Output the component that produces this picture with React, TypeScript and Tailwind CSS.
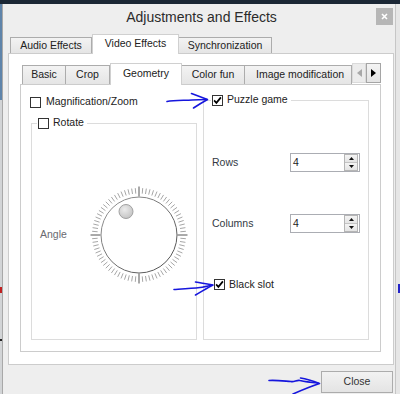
import React from "react";

function Check({ checked }: { checked?: boolean }) {
  return (
    <span className="w-[11px] h-[11px] border border-[#333333] bg-white flex items-center justify-center shrink-0">
      {checked && (
        <svg width="9" height="9" viewBox="0 0 9 9">
          <path d="M1.1 4.4 L3.4 6.9 L7.9 1.4" fill="none" stroke="#000" strokeWidth="1.7" />
        </svg>
      )}
    </span>
  );
}

function Spin({ value }: { value: string }) {
  return (
    <div className="w-[70px] h-[19px] border border-[#abadb3] bg-white flex items-center">
      <span className="pl-[2px] text-[10.5px] text-[#222]">{value}</span>
      <div className="ml-auto mr-px h-[17px] w-[14px] flex flex-col border border-[#b5b5b5]">
        <div className="flex-1 flex items-center justify-center bg-linear-to-b from-[#f4f4f4] to-[#e4e4e4] border-b border-[#c4c4c4]">
          <svg width="5" height="3" viewBox="0 0 5 3">
            <path d="M0 3 L2.5 0 L5 3 Z" fill="#111" />
          </svg>
        </div>
        <div className="flex-1 flex items-center justify-center bg-linear-to-b from-[#f4f4f4] to-[#e4e4e4]">
          <svg width="5" height="3" viewBox="0 0 5 3">
            <path d="M0 0 L2.5 3 L5 0 Z" fill="#111" />
          </svg>
        </div>
      </div>
    </div>
  );
}

function Dial() {
  const ticks = [];
  const n = 80;
  for (let i = 0; i < n; i++) {
    const a = (i / n) * Math.PI * 2;
    const long = i % 20 === 0;
    const r1 = long ? 38.5 : 41.5;
    const r2 = long ? 48.5 : 47;
    const s = Math.sin(a);
    const c = Math.cos(a);
    ticks.push(
      <line
        key={i}
        x1={50 + s * r1}
        y1={50 - c * r1}
        x2={50 + s * r2}
        y2={50 - c * r2}
        stroke={long ? "#555" : "#9c9c9c"}
        strokeWidth={long ? 1 : 0.9}
      />
    );
  }
  return (
    <svg width="100" height="100" viewBox="0 0 100 100" className="shrink-0">
      <defs>
        <radialGradient id="knob" cx="0.4" cy="0.35" r="0.7">
          <stop offset="0" stopColor="#ececec" />
          <stop offset="1" stopColor="#c2c2c2" />
        </radialGradient>
        <linearGradient id="rim" x1="0" y1="0" x2="1" y2="1">
          <stop offset="0" stopColor="#9a9a9a" />
          <stop offset="1" stopColor="#4a4a4a" />
        </linearGradient>
      </defs>
      {ticks}
      <circle cx="50" cy="50" r="38" fill="#fff" stroke="url(#rim)" strokeWidth="1" />
      <circle cx="37" cy="26.5" r="7" fill="url(#knob)" stroke="#a2a2a2" strokeWidth="1" />
    </svg>
  );
}

export default function App() {
  const tabBase = "h-[16px] flex items-center justify-center border border-b-0 border-[#acacac] bg-linear-to-b from-[#f3f3f3] to-[#e5e5e5] text-[10.5px] text-[#222] whitespace-nowrap";
  const itabBase = "h-[19px] flex items-center justify-center border border-b-0 border-[#acacac] bg-linear-to-b from-[#f3f3f3] to-[#e5e5e5] text-[10.5px] text-[#222] whitespace-nowrap";
  return (
    <div className="relative w-[400px] h-[394px] overflow-hidden bg-[#eeeeee] flex flex-col font-['Liberation_Sans',Arial,sans-serif] text-[#222]">
      <div className="h-[4px] bg-[#1b2735] shrink-0" />
      <div className="flex flex-1 min-h-0">
        {/* left desktop edge */}
        <div className="w-[2px] flex flex-col">
          <div className="h-[96px] bg-[#5f84aa]" />
          <div className="h-[187px] bg-[#d2d4d6]" />
          <div className="h-[6px] bg-[#c02020]" />
          <div className="h-[46px] bg-[#d2d4d6]" />
          <div className="h-[2px] bg-[#222]" />
          <div className="flex-1 bg-[#d2d4d6]" />
        </div>

        {/* window */}
        <div className="flex-1 flex flex-col border-l border-[#a8a8a8] bg-[#eeeeee]">
          {/* title bar */}
          <div className="grid grid-cols-[1fr_auto_1fr] h-[29px] pl-[5px] shrink-0">
            <div />
            <div className="self-center mb-[3px] text-[14px] text-[#2b2b2b] whitespace-nowrap">Adjustments and Effects</div>
            <div className="flex justify-end items-start pt-[4px] pr-[2px]">
              <div className="w-[17px] h-[17px] bg-[#b6b6b6] flex items-center justify-center">
                <svg width="7" height="7" viewBox="0 0 7 7">
                  <path d="M1 1 L6 6 M6 1 L1 6" stroke="#fff" strokeWidth="1.6" />
                </svg>
              </div>
            </div>
          </div>

          {/* outer tab widget */}
          <div className="ml-[5px] mr-px flex flex-col">
            <div className="h-[20px] flex items-end pl-[2px]">
              <div className={`${tabBase} w-[82px]`}>Audio Effects</div>
              <div className="relative z-10 -mb-px h-[20px] w-[87px] flex items-center justify-center border border-b-0 border-[#d0d0d0] bg-white text-[10.5px] text-[#222] pb-[2px] whitespace-nowrap">
                Video Effects
              </div>
              <div className={`${tabBase} w-[93px] border-l-0`}>Synchronization</div>
            </div>
            <div className="h-[312px] border border-[#cccccc] bg-white pl-[11px] pt-[9px] pr-[12px] pb-[12px] flex flex-col">
              {/* inner tab widget */}
              <div className="h-[21px] flex items-end pl-[2px] shrink-0">
                <div className={`${itabBase} w-[44px]`}>Basic</div>
                <div className={`${itabBase} w-[44px] border-l-0`}>Crop</div>
                <div className="relative z-10 -mb-px h-[22px] w-[72px] flex items-center justify-center border border-b-0 border-[#d0d0d0] bg-white text-[10.5px] text-[#222] pb-[2px] whitespace-nowrap">
                  Geometry
                </div>
                <div className={`${itabBase} w-[63px] border-l-0`}>Color fun</div>
                <div className={`${itabBase} w-[107px] border-l-0 justify-start pl-[11px] overflow-hidden`}>Image modification</div>
                <div className="self-start h-[20px] w-[14px] flex items-center justify-center bg-[#ececec] border border-[#dadada]">
                  <svg width="5" height="8" viewBox="0 0 5 8">
                    <path d="M5 0 L0 4 L5 8 Z" fill="#a8a8a8" />
                  </svg>
                </div>
                <div className="self-start h-[20px] w-[15px] flex items-center justify-center bg-linear-to-b from-[#f4f4f4] to-[#e4e4e4] border border-[#a5a5a5]">
                  <svg width="5" height="8" viewBox="0 0 5 8">
                    <path d="M0 0 L5 4 L0 8 Z" fill="#000" />
                  </svg>
                </div>
              </div>
              <div className="flex-1 border border-[#cccccc] bg-white pl-[9px] pt-[11px] pr-[11px] pb-[11px]">
                <div className="grid grid-cols-[167px_166px] gap-x-[6px] h-full">
                  {/* left column */}
                  <div className="flex flex-col">
                    <div className="h-[12px] flex items-center gap-[5px]">
                      <Check />
                      <span className="text-[10.5px] text-[#222] whitespace-nowrap">Magnification/Zoom</span>
                    </div>
                    <div className="relative ml-px mt-[15px] flex-1 border border-[#dcdcdc]">
                      <div className="absolute -top-[7px] left-[5px] h-[12px] bg-white px-px pr-[3px] flex items-center gap-[4px]">
                        <Check />
                        <span className="text-[10.5px] text-[#222]">Rotate</span>
                      </div>
                      <div className="h-full flex items-center pl-[8px] pt-[7px]">
                        <span className="w-[49px] text-[10.5px] text-[#6a6a70]">Angle</span>
                        <Dial />
                      </div>
                    </div>
                  </div>
                  {/* right column */}
                  <div className="relative mt-[4px] border border-[#dcdcdc] flex flex-col pl-[8px]">
                    <div className="absolute -top-[7px] left-[7px] h-[12px] bg-white px-px pr-[3px] flex items-center gap-[4px]">
                      <Check checked />
                      <span className="text-[10.5px] text-[#222] whitespace-nowrap">Puzzle game</span>
                    </div>
                    <div className="mt-[52px] h-[19px] flex items-center">
                      <span className="w-[78px] text-[10.5px] text-[#333a44]">Rows</span>
                      <Spin value="4" />
                    </div>
                    <div className="mt-[42px] h-[19px] flex items-center">
                      <span className="w-[78px] text-[10.5px] text-[#333a44]">Columns</span>
                      <Spin value="4" />
                    </div>
                    <div className="mt-[46px] h-[11px] flex items-center gap-[4px] pl-[2px]">
                      <Check checked />
                      <span className="text-[10.5px] text-[#222] whitespace-nowrap">Black slot</span>
                    </div>
                  </div>
                </div>
              </div>
            </div>
          </div>

          {/* bottom bar */}
          <div className="mt-[6px] flex justify-end pr-[2px]">
            <div className="w-[72px] h-[22px] border border-[#acacac] bg-linear-to-b from-[#f2f2f2] to-[#e4e4e4] flex items-center justify-center text-[10.5px] text-[#333]">
              Close
            </div>
          </div>
        </div>

        {/* right desktop edge */}
        <div className="w-[5px] flex flex-col bg-[#e6e6e6] border-l border-[#c6c6c6]">
          <div className="h-[280px]" />
          <div className="h-[9px] ml-[2px] bg-[#2424c8]" />
        </div>
      </div>

      {/* hand-drawn annotation arrows */}
      <svg className="absolute inset-0 pointer-events-none" width="400" height="394" viewBox="0 0 400 394">
        <g fill="none" stroke="#1616dd" strokeWidth="1.6" strokeLinecap="round" strokeLinejoin="round">
          <path d="M167 101.5 C174 100, 184 100.5, 192 100 C198 99.5, 203 99.5, 207 99.5" />
          <path d="M191.5 93.5 C197 95.5, 202 97.5, 207.5 99.5 C203 102, 198 105, 193.5 108" />
          <path d="M174 289.5 C182 289, 192 288.5, 200 287.5 C204 287, 208 286, 212 285" />
          <path d="M195.5 282 C201 283, 207 284, 213 285 C207 288, 201 292, 195.5 295" />
          <path d="M269 380.5 C276 380, 284 381, 291 381.5 C294 382.5, 297 379.5, 300 380.5 C306 382, 312 382.5, 318 383" />
          <path d="M300.5 378 C307 379, 313 381, 319.5 383.5 C312 386, 302 390, 293 394" />
        </g>
      </svg>
    </div>
  );
}
